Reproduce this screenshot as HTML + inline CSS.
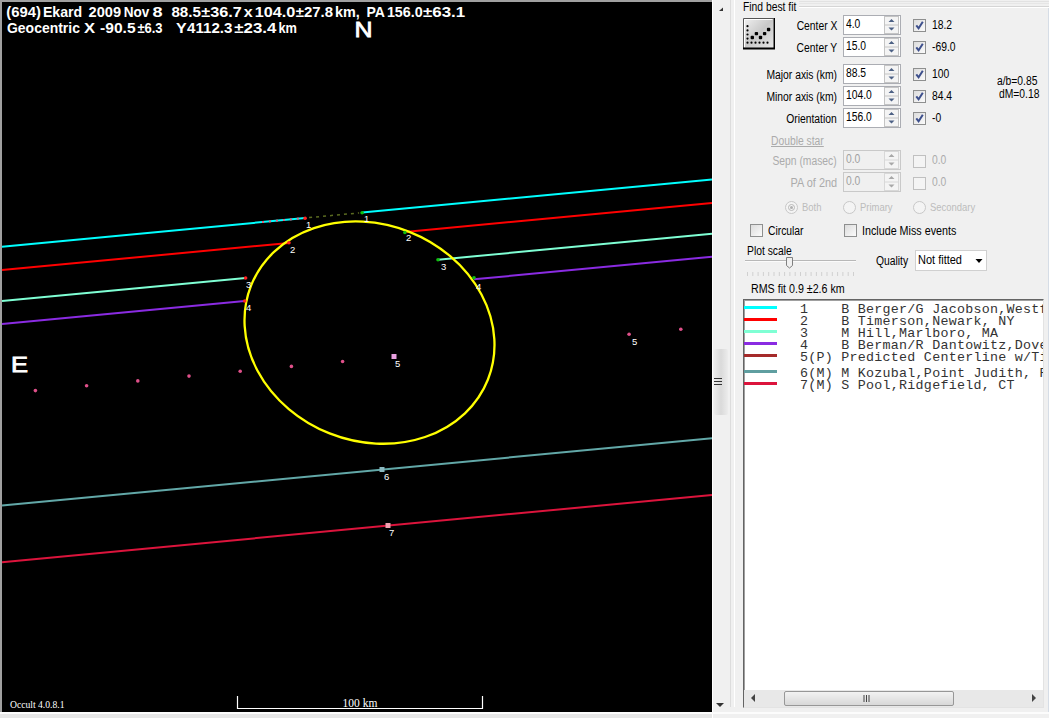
<!DOCTYPE html>
<html><head><meta charset="utf-8">
<style>
html,body{margin:0;padding:0;}
body{width:1049px;height:718px;position:relative;overflow:hidden;background:#f0f0f0;font-family:"Liberation Sans",sans-serif;}
.a{position:absolute;}
.t{position:absolute;color:#000;font-size:12px;line-height:14px;white-space:nowrap;}
.dis{color:#ababab;}
.tb{position:absolute;width:58px;height:20px;background:#fff;border:1px solid #abadb3;box-sizing:border-box;font-size:12px;line-height:17px;padding-left:2px;}
.tb.d{background:#f0f0f0;border-color:#c9c9c9;color:#a0a0a0;}
.spin{position:absolute;right:1px;top:1px;}
.cb{position:absolute;width:13px;height:13px;background:linear-gradient(135deg,#dcdcdc,#fbfbfb);border:1px solid #8e8f8f;box-sizing:border-box;}
.cb.d{border-color:#c0c0c0;background:#f4f4f4;}
.mono{font-family:"Liberation Mono",monospace;font-size:13.33px;letter-spacing:0.26px;line-height:12px;white-space:pre;position:absolute;color:#333;}
</style></head><body>
<div class="a" style="left:0;top:0;width:712px;height:712px;background:#000;border-left:2px solid #a0a0a0;border-top:2px solid #a0a0a0;box-sizing:border-box"></div>
<svg class="a" style="left:0;top:0" width="712" height="712" viewBox="0 0 712 712">
<line x1="2.0" y1="246.7" x2="305.1" y2="218.0" stroke="#00ffff" stroke-width="2" />
<line x1="362.1" y1="212.6" x2="712.0" y2="179.5" stroke="#00ffff" stroke-width="2" />
<line x1="2.0" y1="270.1" x2="289.0" y2="242.9" stroke="#ff0000" stroke-width="2" />
<line x1="404.9" y1="232.0" x2="712.0" y2="202.9" stroke="#ff0000" stroke-width="2" />
<line x1="2.0" y1="301.0" x2="245.6" y2="277.9" stroke="#7fffd4" stroke-width="2" />
<line x1="438.0" y1="259.7" x2="712.0" y2="233.8" stroke="#7fffd4" stroke-width="2" />
<line x1="2.0" y1="324.0" x2="244.7" y2="301.0" stroke="#8a2be2" stroke-width="2" />
<line x1="474.0" y1="279.3" x2="712.0" y2="256.8" stroke="#8a2be2" stroke-width="2" />
<line x1="309.1" y1="217.6" x2="359.1" y2="212.9" stroke="#5a6a20" stroke-width="1.5" stroke-dasharray="3 4"/>
<line x1="262.0" y1="222.1" x2="303.0" y2="218.2" stroke="#e06080" stroke-width="2" stroke-dasharray="2 5"/>
<line x1="2.0" y1="505.5" x2="712.0" y2="438.3" stroke="#62a8a8" stroke-width="2" />
<line x1="2.0" y1="562.2" x2="712.0" y2="495.0" stroke="#dc143c" stroke-width="2" />
<ellipse cx="369.5" cy="332.6" rx="127.4" ry="108.4" transform="rotate(21.6 369.5 332.6)" fill="none" stroke="#ffff00" stroke-width="2.3"/>
<circle cx="305.1" cy="218.3" r="1.8" fill="#ff2020"/>
<circle cx="289.0" cy="242.8" r="1.8" fill="#ff2020"/>
<circle cx="245.6" cy="278.0" r="1.8" fill="#ff2020"/>
<circle cx="244.7" cy="301.0" r="1.8" fill="#ff2020"/>
<circle cx="362.1" cy="212.8" r="1.8" fill="#10c010"/>
<circle cx="404.9" cy="232.5" r="1.8" fill="#10c010"/>
<circle cx="438.0" cy="259.7" r="1.8" fill="#10c010"/>
<circle cx="474.0" cy="277.7" r="1.8" fill="#10c010"/>
<text x="306.0" y="228.0" fill="#fff" font-size="9.5" font-family="Liberation Sans">1</text>
<text x="364.0" y="222.0" fill="#fff" font-size="9.5" font-family="Liberation Sans">1</text>
<text x="290.0" y="253.0" fill="#fff" font-size="9.5" font-family="Liberation Sans">2</text>
<text x="406.0" y="241.0" fill="#fff" font-size="9.5" font-family="Liberation Sans">2</text>
<text x="246.0" y="288.0" fill="#fff" font-size="9.5" font-family="Liberation Sans">3</text>
<text x="441.0" y="270.0" fill="#fff" font-size="9.5" font-family="Liberation Sans">3</text>
<text x="246.0" y="311.0" fill="#fff" font-size="9.5" font-family="Liberation Sans">4</text>
<text x="476.0" y="290.0" fill="#fff" font-size="9.5" font-family="Liberation Sans">4</text>
<text x="395.0" y="367.0" fill="#fff" font-size="9.5" font-family="Liberation Sans">5</text>
<text x="632.0" y="345.0" fill="#fff" font-size="9.5" font-family="Liberation Sans">5</text>
<text x="384.0" y="480.0" fill="#fff" font-size="9.5" font-family="Liberation Sans">6</text>
<text x="389.0" y="536.0" fill="#fff" font-size="9.5" font-family="Liberation Sans">7</text>
<circle cx="35.4" cy="390.6" r="1.8" fill="#e0508a"/>
<circle cx="86.6" cy="385.8" r="1.8" fill="#e0508a"/>
<circle cx="137.8" cy="380.9" r="1.8" fill="#e0508a"/>
<circle cx="189.0" cy="376.1" r="1.8" fill="#e0508a"/>
<circle cx="240.2" cy="371.2" r="1.8" fill="#e0508a"/>
<circle cx="291.4" cy="366.4" r="1.8" fill="#e0508a"/>
<circle cx="342.6" cy="361.5" r="1.8" fill="#e0508a"/>
<circle cx="629.1" cy="334.2" r="1.8" fill="#e0508a"/>
<circle cx="680.8" cy="329.3" r="1.8" fill="#e0508a"/>
<rect x="391.5" y="354" width="5" height="5" fill="#e8a0e0"/>
<rect x="379.5" y="467" width="5" height="5" fill="#8ab8c0"/>
<rect x="385.5" y="523" width="5" height="5" fill="#f0a0b0"/>
<path d="M237.5 696 V708.5 H482.5 V696" fill="none" stroke="#fff" stroke-width="1.2"/>
<text x="360" y="706.5" fill="#fff" font-size="11.5" font-family="Liberation Serif" text-anchor="middle">100 km</text>
<text x="10" y="707.5" fill="#fff" font-size="10" font-family="Liberation Serif" textLength="54.5" lengthAdjust="spacingAndGlyphs">Occult 4.0.8.1</text>
<text x="6.3" y="17" fill="#fff" font-size="14.5" font-weight="bold" font-family="Liberation Sans" textLength="34.7" lengthAdjust="spacingAndGlyphs">(694)</text>
<text x="42.9" y="17" fill="#fff" font-size="14.5" font-weight="bold" font-family="Liberation Sans" textLength="39.3" lengthAdjust="spacingAndGlyphs">Ekard</text>
<text x="88.6" y="17" fill="#fff" font-size="14.5" font-weight="bold" font-family="Liberation Sans" textLength="32.5" lengthAdjust="spacingAndGlyphs">2009</text>
<text x="123.7" y="17" fill="#fff" font-size="14.5" font-weight="bold" font-family="Liberation Sans" textLength="25.6" lengthAdjust="spacingAndGlyphs">Nov</text>
<text x="152.5" y="17" fill="#fff" font-size="14.5" font-weight="bold" font-family="Liberation Sans" textLength="10.1" lengthAdjust="spacingAndGlyphs">8</text>
<text x="171.4" y="17" fill="#fff" font-size="14.5" font-weight="bold" font-family="Liberation Sans" textLength="29.5" lengthAdjust="spacingAndGlyphs">88.5</text>
<text x="201.3" y="17" fill="#fff" font-size="14.5" font-weight="bold" font-family="Liberation Sans" textLength="40.5" lengthAdjust="spacingAndGlyphs">±36.7</text>
<text x="243.8" y="17" fill="#fff" font-size="14.5" font-weight="bold" font-family="Liberation Sans" textLength="9.0" lengthAdjust="spacingAndGlyphs">x</text>
<text x="254.8" y="17" fill="#fff" font-size="14.5" font-weight="bold" font-family="Liberation Sans" textLength="40.5" lengthAdjust="spacingAndGlyphs">104.0</text>
<text x="295.7" y="17" fill="#fff" font-size="14.5" font-weight="bold" font-family="Liberation Sans" textLength="37.3" lengthAdjust="spacingAndGlyphs">±27.8</text>
<text x="335.0" y="17" fill="#fff" font-size="14.5" font-weight="bold" font-family="Liberation Sans" textLength="24.8" lengthAdjust="spacingAndGlyphs">km,</text>
<text x="366.4" y="17" fill="#fff" font-size="14.5" font-weight="bold" font-family="Liberation Sans" textLength="18.5" lengthAdjust="spacingAndGlyphs">PA</text>
<text x="386.9" y="17" fill="#fff" font-size="14.5" font-weight="bold" font-family="Liberation Sans" textLength="35.8" lengthAdjust="spacingAndGlyphs">156.0</text>
<text x="423.1" y="17" fill="#fff" font-size="14.5" font-weight="bold" font-family="Liberation Sans" textLength="42.1" lengthAdjust="spacingAndGlyphs">±63.1</text>
<text x="7.0" y="33" fill="#fff" font-size="14.5" font-weight="bold" font-family="Liberation Sans" textLength="72.9" lengthAdjust="spacingAndGlyphs">Geocentric</text>
<text x="84.1" y="33" fill="#fff" font-size="14.5" font-weight="bold" font-family="Liberation Sans" textLength="11.1" lengthAdjust="spacingAndGlyphs">X</text>
<text x="100.1" y="33" fill="#fff" font-size="14.5" font-weight="bold" font-family="Liberation Sans" textLength="35.5" lengthAdjust="spacingAndGlyphs">-90.5</text>
<text x="137.4" y="33" fill="#fff" font-size="14.5" font-weight="bold" font-family="Liberation Sans" textLength="25.2" lengthAdjust="spacingAndGlyphs">±6.3</text>
<text x="176.1" y="33" fill="#fff" font-size="14.5" font-weight="bold" font-family="Liberation Sans" textLength="10.7" lengthAdjust="spacingAndGlyphs">Y</text>
<text x="187.1" y="33" fill="#fff" font-size="14.5" font-weight="bold" font-family="Liberation Sans" textLength="45.3" lengthAdjust="spacingAndGlyphs">4112.3</text>
<text x="234.3" y="33" fill="#fff" font-size="14.5" font-weight="bold" font-family="Liberation Sans" textLength="42.1" lengthAdjust="spacingAndGlyphs">±23.4</text>
<text x="278.4" y="33" fill="#fff" font-size="14.5" font-weight="bold" font-family="Liberation Sans" textLength="18.5" lengthAdjust="spacingAndGlyphs">km</text>
<text x="354.5" y="36.6" fill="#fff" stroke="#fff" stroke-width="0.8" font-size="22" font-family="Liberation Sans" textLength="18" lengthAdjust="spacingAndGlyphs">N</text>
<text x="11" y="372.2" fill="#fff" stroke="#fff" stroke-width="0.8" font-size="21.8" font-family="Liberation Sans" textLength="17" lengthAdjust="spacingAndGlyphs">E</text>
</svg>
<div class="t" style="right:212px;top:19px;text-align:right"><span style="display:inline-block;transform:scaleX(0.86);transform-origin:100% 0">Center X</span></div>
<div class="tb" style="left:843px;top:15px"><span style="display:inline-block;transform:scaleX(0.86);transform-origin:0 0">4.0</span><svg class="spin" width="15" height="18" style="right:1px;top:0px"><rect x="0.5" y="0.5" width="14" height="17" fill="#f4f4f4" stroke="#c4c4c4"/><line x1="1" y1="9" x2="14" y2="9" stroke="#c4c4c4"/><path d="M4.5 6 L7.5 3 L10.5 6Z M4.5 11.5 L7.5 14.5 L10.5 11.5Z" fill="#4d6185"/></svg></div>
<div class="cb" style="left:913px;top:19px"><svg width="11" height="11" style="position:absolute;left:0;top:0"><path d="M2.3 5.3 L4.6 8.3 L8.8 1.8" fill="none" stroke="#3d4f8c" stroke-width="2"/></svg></div>
<div class="t" style="left:932px;top:18px;"><span style="display:inline-block;transform:scaleX(0.86);transform-origin:0 0">18.2</span></div>
<div class="t" style="right:212px;top:41px;text-align:right"><span style="display:inline-block;transform:scaleX(0.86);transform-origin:100% 0">Center Y</span></div>
<div class="tb" style="left:843px;top:37px"><span style="display:inline-block;transform:scaleX(0.86);transform-origin:0 0">15.0</span><svg class="spin" width="15" height="18" style="right:1px;top:0px"><rect x="0.5" y="0.5" width="14" height="17" fill="#f4f4f4" stroke="#c4c4c4"/><line x1="1" y1="9" x2="14" y2="9" stroke="#c4c4c4"/><path d="M4.5 6 L7.5 3 L10.5 6Z M4.5 11.5 L7.5 14.5 L10.5 11.5Z" fill="#4d6185"/></svg></div>
<div class="cb" style="left:913px;top:41px"><svg width="11" height="11" style="position:absolute;left:0;top:0"><path d="M2.3 5.3 L4.6 8.3 L8.8 1.8" fill="none" stroke="#3d4f8c" stroke-width="2"/></svg></div>
<div class="t" style="left:932px;top:40px;"><span style="display:inline-block;transform:scaleX(0.86);transform-origin:0 0">-69.0</span></div>
<div class="t" style="right:212px;top:68px;text-align:right"><span style="display:inline-block;transform:scaleX(0.86);transform-origin:100% 0">Major axis (km)</span></div>
<div class="tb" style="left:843px;top:64px"><span style="display:inline-block;transform:scaleX(0.86);transform-origin:0 0">88.5</span><svg class="spin" width="15" height="18" style="right:1px;top:0px"><rect x="0.5" y="0.5" width="14" height="17" fill="#f4f4f4" stroke="#c4c4c4"/><line x1="1" y1="9" x2="14" y2="9" stroke="#c4c4c4"/><path d="M4.5 6 L7.5 3 L10.5 6Z M4.5 11.5 L7.5 14.5 L10.5 11.5Z" fill="#4d6185"/></svg></div>
<div class="cb" style="left:913px;top:68px"><svg width="11" height="11" style="position:absolute;left:0;top:0"><path d="M2.3 5.3 L4.6 8.3 L8.8 1.8" fill="none" stroke="#3d4f8c" stroke-width="2"/></svg></div>
<div class="t" style="left:932px;top:67px;"><span style="display:inline-block;transform:scaleX(0.86);transform-origin:0 0">100</span></div>
<div class="t" style="right:212px;top:90px;text-align:right"><span style="display:inline-block;transform:scaleX(0.86);transform-origin:100% 0">Minor axis (km)</span></div>
<div class="tb" style="left:843px;top:86px"><span style="display:inline-block;transform:scaleX(0.86);transform-origin:0 0">104.0</span><svg class="spin" width="15" height="18" style="right:1px;top:0px"><rect x="0.5" y="0.5" width="14" height="17" fill="#f4f4f4" stroke="#c4c4c4"/><line x1="1" y1="9" x2="14" y2="9" stroke="#c4c4c4"/><path d="M4.5 6 L7.5 3 L10.5 6Z M4.5 11.5 L7.5 14.5 L10.5 11.5Z" fill="#4d6185"/></svg></div>
<div class="cb" style="left:913px;top:90px"><svg width="11" height="11" style="position:absolute;left:0;top:0"><path d="M2.3 5.3 L4.6 8.3 L8.8 1.8" fill="none" stroke="#3d4f8c" stroke-width="2"/></svg></div>
<div class="t" style="left:932px;top:89px;"><span style="display:inline-block;transform:scaleX(0.86);transform-origin:0 0">84.4</span></div>
<div class="t" style="right:212px;top:112px;text-align:right"><span style="display:inline-block;transform:scaleX(0.86);transform-origin:100% 0">Orientation</span></div>
<div class="tb" style="left:843px;top:108px"><span style="display:inline-block;transform:scaleX(0.86);transform-origin:0 0">156.0</span><svg class="spin" width="15" height="18" style="right:1px;top:0px"><rect x="0.5" y="0.5" width="14" height="17" fill="#f4f4f4" stroke="#c4c4c4"/><line x1="1" y1="9" x2="14" y2="9" stroke="#c4c4c4"/><path d="M4.5 6 L7.5 3 L10.5 6Z M4.5 11.5 L7.5 14.5 L10.5 11.5Z" fill="#4d6185"/></svg></div>
<div class="cb" style="left:913px;top:112px"><svg width="11" height="11" style="position:absolute;left:0;top:0"><path d="M2.3 5.3 L4.6 8.3 L8.8 1.8" fill="none" stroke="#3d4f8c" stroke-width="2"/></svg></div>
<div class="t" style="left:932px;top:111px;"><span style="display:inline-block;transform:scaleX(0.86);transform-origin:0 0">-0</span></div>
<div class="t" style="left:743px;top:0px;"><span style="display:inline-block;transform:scaleX(0.86);transform-origin:0 0">Find best fit</span></div>
<div class="t" style="left:997px;top:74px;"><span style="display:inline-block;transform:scaleX(0.86);transform-origin:0 0">a/b=0.85</span></div>
<div class="t" style="left:999px;top:87px;"><span style="display:inline-block;transform:scaleX(0.86);transform-origin:0 0">dM=0.18</span></div>
<div class="t dis" style="left:771px;top:134px;"><span style="display:inline-block;transform:scaleX(0.86);transform-origin:0 0"><u>Double star</u></span></div>
<div class="t dis" style="right:212px;top:154px;text-align:right"><span style="display:inline-block;transform:scaleX(0.86);transform-origin:100% 0">Sepn (masec)</span></div>
<div class="tb d" style="left:843px;top:150px"><span style="display:inline-block;transform:scaleX(0.86);transform-origin:0 0">0.0</span><svg class="spin" width="15" height="18" style="right:1px;top:0px"><rect x="0.5" y="0.5" width="14" height="17" fill="#f4f4f4" stroke="#d8d8d8"/><line x1="1" y1="9" x2="14" y2="9" stroke="#d8d8d8"/><path d="M4.5 6 L7.5 3 L10.5 6Z M4.5 11.5 L7.5 14.5 L10.5 11.5Z" fill="#a8a8a8"/></svg></div>
<div class="cb d" style="left:913px;top:155px"></div>
<div class="t dis" style="left:932px;top:153px;"><span style="display:inline-block;transform:scaleX(0.86);transform-origin:0 0">0.0</span></div>
<div class="t dis" style="right:212px;top:176px;text-align:right"><span style="display:inline-block;transform:scaleX(0.91);transform-origin:100% 0">PA of 2nd</span></div>
<div class="tb d" style="left:843px;top:172px"><span style="display:inline-block;transform:scaleX(0.86);transform-origin:0 0">0.0</span><svg class="spin" width="15" height="18" style="right:1px;top:0px"><rect x="0.5" y="0.5" width="14" height="17" fill="#f4f4f4" stroke="#d8d8d8"/><line x1="1" y1="9" x2="14" y2="9" stroke="#d8d8d8"/><path d="M4.5 6 L7.5 3 L10.5 6Z M4.5 11.5 L7.5 14.5 L10.5 11.5Z" fill="#a8a8a8"/></svg></div>
<div class="cb d" style="left:913px;top:177px"></div>
<div class="t dis" style="left:932px;top:175px;"><span style="display:inline-block;transform:scaleX(0.86);transform-origin:0 0">0.0</span></div>
<div class="a" style="left:785px;top:201px;width:13px;height:13px;border:1px solid #c8c8c8;border-radius:50%;box-sizing:border-box;background:#f4f4f4"></div>
<div class="t dis" style="left:802px;top:200px;font-size:11px;color:#bcbcbc"><span style="display:inline-block;transform:scaleX(0.86);transform-origin:0 0">Both</span></div>
<div class="a" style="left:843px;top:201px;width:13px;height:13px;border:1px solid #c8c8c8;border-radius:50%;box-sizing:border-box;background:#f4f4f4"></div>
<div class="t dis" style="left:860px;top:200px;font-size:11px;color:#bcbcbc"><span style="display:inline-block;transform:scaleX(0.86);transform-origin:0 0">Primary</span></div>
<div class="a" style="left:913px;top:201px;width:13px;height:13px;border:1px solid #c8c8c8;border-radius:50%;box-sizing:border-box;background:#f4f4f4"></div>
<div class="t dis" style="left:930px;top:200px;font-size:11px;color:#bcbcbc"><span style="display:inline-block;transform:scaleX(0.86);transform-origin:0 0">Secondary</span></div>
<div class="a" style="left:788px;top:204px;width:7px;height:7px;border-radius:50%;border:1px solid #b8b8b8;box-sizing:border-box"></div>
<div class="a" style="left:790px;top:206px;width:3px;height:3px;border-radius:50%;background:#b0b0b0"></div>
<div class="cb" style="left:750px;top:224px"></div>
<div class="t" style="left:768px;top:224px;"><span style="display:inline-block;transform:scaleX(0.86);transform-origin:0 0">Circular</span></div>
<div class="cb" style="left:844px;top:224px"></div>
<div class="t" style="left:862px;top:224px;"><span style="display:inline-block;transform:scaleX(0.895);transform-origin:0 0">Include Miss events</span></div>
<div class="t" style="left:747px;top:244px;"><span style="display:inline-block;transform:scaleX(0.86);transform-origin:0 0">Plot scale</span></div>
<div class="t" style="left:876px;top:254px;"><span style="display:inline-block;transform:scaleX(0.86);transform-origin:0 0">Quality</span></div>
<svg class="a" style="left:744px;top:254px" width="115" height="26"><line x1="1" y1="6.5" x2="112" y2="6.5" stroke="#b8b8b8" stroke-width="1"/><line x1="1" y1="7.5" x2="112" y2="7.5" stroke="#fbfbfb" stroke-width="1"/><path d="M42.5 3.5 H48.5 V11.5 L45.5 14 L42.5 11.5Z" fill="#f0f0f0" stroke="#808080"/><line x1="3.5" y1="18" x2="3.5" y2="22" stroke="#d0d0d0"/><line x1="8.8" y1="18" x2="8.8" y2="22" stroke="#d0d0d0"/><line x1="14.1" y1="18" x2="14.1" y2="22" stroke="#d0d0d0"/><line x1="19.4" y1="18" x2="19.4" y2="22" stroke="#d0d0d0"/><line x1="24.7" y1="18" x2="24.7" y2="22" stroke="#d0d0d0"/><line x1="30.0" y1="18" x2="30.0" y2="22" stroke="#d0d0d0"/><line x1="35.3" y1="18" x2="35.3" y2="22" stroke="#d0d0d0"/><line x1="40.6" y1="18" x2="40.6" y2="22" stroke="#d0d0d0"/><line x1="45.9" y1="18" x2="45.9" y2="22" stroke="#d0d0d0"/><line x1="51.2" y1="18" x2="51.2" y2="22" stroke="#d0d0d0"/><line x1="56.5" y1="18" x2="56.5" y2="22" stroke="#d0d0d0"/><line x1="61.8" y1="18" x2="61.8" y2="22" stroke="#d0d0d0"/><line x1="67.1" y1="18" x2="67.1" y2="22" stroke="#d0d0d0"/><line x1="72.4" y1="18" x2="72.4" y2="22" stroke="#d0d0d0"/><line x1="77.7" y1="18" x2="77.7" y2="22" stroke="#d0d0d0"/><line x1="83.0" y1="18" x2="83.0" y2="22" stroke="#d0d0d0"/><line x1="88.3" y1="18" x2="88.3" y2="22" stroke="#d0d0d0"/><line x1="93.6" y1="18" x2="93.6" y2="22" stroke="#d0d0d0"/><line x1="98.9" y1="18" x2="98.9" y2="22" stroke="#d0d0d0"/><line x1="104.2" y1="18" x2="104.2" y2="22" stroke="#d0d0d0"/><line x1="109.5" y1="18" x2="109.5" y2="22" stroke="#d0d0d0"/></svg>
<div class="a" style="left:915px;top:250px;width:72px;height:21px;background:#fff;border:1px solid #d0d0d0;box-sizing:border-box"><div class="t" style="left:2px;top:2px"><span style="display:inline-block;transform:scaleX(0.915);transform-origin:0 0">Not fitted</span></div><svg class="a" style="left:59px;top:8px" width="9" height="6"><path d="M0.5 0H7.5L4 4Z" fill="#000"/></svg></div>
<div class="t" style="left:751px;top:282px;"><span style="display:inline-block;transform:scaleX(0.89);transform-origin:0 0">RMS fit 0.9 ±2.6 km</span></div>
<div class="a" style="left:743px;top:299px;width:301px;height:409px;background:#fff;border-top:1px solid #646464;border-left:1px solid #646464;border-right:1px solid #e3e3e3;border-bottom:1px solid #e3e3e3;box-shadow:inset 1px 1px 0 #a0a0a0;box-sizing:border-box;overflow:hidden">
<div class="a" style="left:0;top:6px;width:33px;height:3px;background:#00ffff"></div>
<div class="mono" style="left:56px;top:4px">1    B Berger/G Jacobson,Westfi</div>
<div class="a" style="left:0;top:18px;width:33px;height:3px;background:#ff0000"></div>
<div class="mono" style="left:56px;top:16px">2    B Timerson,Newark, NY</div>
<div class="a" style="left:0;top:30px;width:33px;height:3px;background:#7fffd4"></div>
<div class="mono" style="left:56px;top:28px">3    M Hill,Marlboro, MA</div>
<div class="a" style="left:0;top:42px;width:33px;height:3px;background:#8a2be2"></div>
<div class="mono" style="left:56px;top:40px">4    B Berman/R Dantowitz,Dover</div>
<div class="a" style="left:0;top:54px;width:33px;height:3px;background:#a52a2a"></div>
<div class="mono" style="left:56px;top:52px">5(P) Predicted Centerline w/Ti</div>
<div class="a" style="left:0;top:70px;width:33px;height:3px;background:#5f9ea0"></div>
<div class="mono" style="left:56px;top:68px">6(M) M Kozubal,Point Judith, R</div>
<div class="a" style="left:0;top:82px;width:33px;height:3px;background:#dc143c"></div>
<div class="mono" style="left:56px;top:80px">7(M) S Pool,Ridgefield, CT</div>
<div class="a" style="left:0;top:390px;width:300px;height:17px;background:#e8e8e8"></div>
<div class="a" style="left:40px;top:391px;width:170px;height:15px;background:linear-gradient(#f2f2f2,#d8d8d8);border:1px solid #979797;border-radius:2px;box-sizing:border-box"></div>
<svg class="a" style="left:119px;top:395px" width="8" height="7"><path d="M1 0V7M3.5 0V7M6 0V7" stroke="#444" stroke-width="1"/></svg>
<svg class="a" style="left:6px;top:394px" width="6" height="9"><path d="M5 0V8L1 4Z" fill="#444"/></svg>
<svg class="a" style="left:287px;top:394px" width="6" height="9"><path d="M1 0V8L5 4Z" fill="#444"/></svg>
</div>
<div class="a" style="left:712px;top:0;width:1px;height:718px;background:#fff"></div>
<div class="a" style="left:730px;top:0;width:1px;height:707px;background:#dcdcdc"></div>
<div class="a" style="left:734px;top:0;width:1px;height:707px;background:#fff"></div>
<div class="a" style="left:714px;top:349px;width:14px;height:66px;background:linear-gradient(90deg,#ececec,#dadada,#ececec);border-radius:2px"></div>
<svg class="a" style="left:714px;top:377px" width="9" height="9"><path d="M0 1.5H8M0 4.5H8M0 7.5H8" stroke="#333" stroke-width="1"/></svg>
<svg class="a" style="left:718px;top:7px" width="6" height="5"><path d="M5 0.5V4H1Z" fill="#333"/></svg>
<svg class="a" style="left:716px;top:703px" width="9" height="5"><path d="M0 0H8L4 4Z" fill="#333"/></svg>
<div class="a" style="left:1048px;top:8px;width:1px;height:705px;background:#d6dde6"></div>
<div class="a" style="left:0;top:712px;width:1049px;height:2px;background:#fcfcfc"></div>
<div class="a" style="left:0;top:714px;width:712px;height:4px;background:#e6e6e6"></div>
<div class="a" style="left:799px;top:6px;width:250px;height:1px;background:#d5d5d5"></div>
<div class="a" style="left:799px;top:7px;width:250px;height:1px;background:#fff"></div>
<div class="a" style="left:799px;top:1px;width:250px;height:1px;background:#e2e2e2"></div>
<div class="a" style="left:799px;top:3px;width:250px;height:1px;background:#e6e6e6"></div>
<svg class="a" style="left:743px;top:18px" width="32" height="32">
<defs><linearGradient id="bg" x1="0" y1="0" x2="1" y2="1"><stop offset="0" stop-color="#f0f0f0"/><stop offset="0.5" stop-color="#c8c8c8"/><stop offset="1" stop-color="#e6e6e6"/></linearGradient></defs>
<rect x="1" y="1" width="29" height="29" fill="url(#bg)"/>
<path d="M0.5 30.5V0.5H30.5" fill="none" stroke="#555" stroke-width="1"/>
<path d="M1.5 29.5V1.5H29.5" fill="none" stroke="#fff" stroke-width="1"/>
<path d="M0 30.5H31.5V0" fill="none" stroke="#000" stroke-width="2"/>
<g fill="#000" transform="translate(0.6 0.7)"><circle cx="3.9" cy="7.5" r="1.1"/><circle cx="3.9" cy="11.7" r="1.1"/><circle cx="3.9" cy="15.8" r="1.1"/><circle cx="3.9" cy="19.9" r="1.1"/><circle cx="3.9" cy="24" r="1.1"/><circle cx="7.9" cy="24" r="1.1"/><circle cx="11.9" cy="24" r="1.1"/><circle cx="15.9" cy="24" r="1.1"/><circle cx="19.9" cy="24" r="1.1"/><circle cx="23.9" cy="24" r="1.1"/><rect x="7.0" y="17.1" width="3.4" height="3.4" rx="1"/><rect x="11.1" y="13.2" width="3.4" height="3.4" rx="1"/><rect x="15.2" y="17.1" width="3.4" height="3.4" rx="1"/><rect x="19.3" y="13.2" width="3.4" height="3.4" rx="1"/><rect x="23.3" y="9.1" width="3.4" height="3.4" rx="1"/></g></svg>
</body></html>
